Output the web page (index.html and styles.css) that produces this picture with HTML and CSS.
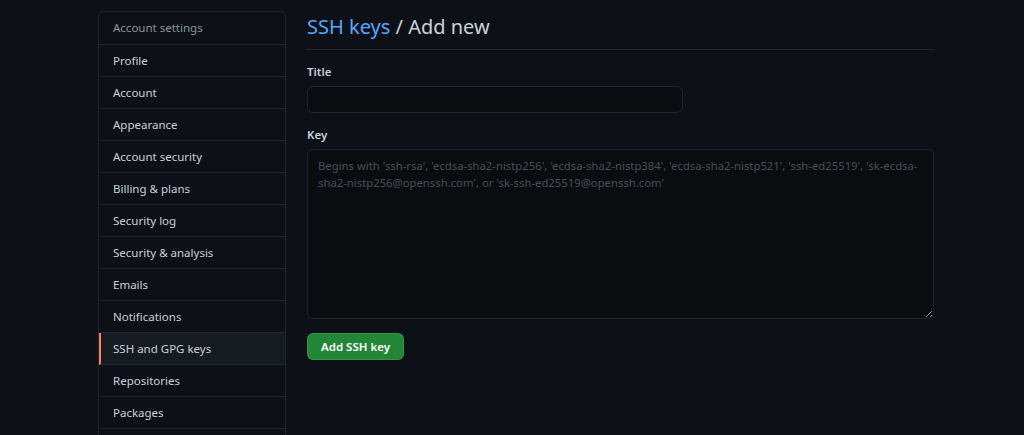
FILE: index.html
```html
<!DOCTYPE html>
<html lang="en">
<head>
    <meta charset="UTF-8">
    <meta name="viewport" content="width=device-width, initial-scale=1.0">
    <title>Add new SSH key</title>
    <link rel="stylesheet" href="styles.css">
</head>
<body>
    <div class="layout">
        <nav class="menu">
            <div class="menu-heading">Account settings</div>
            <a class="menu-item" href="#">Profile</a>
            <a class="menu-item" href="#">Account</a>
            <a class="menu-item" href="#">Appearance</a>
            <a class="menu-item" href="#">Account security</a>
            <a class="menu-item" href="#">Billing &amp; plans</a>
            <a class="menu-item" href="#">Security log</a>
            <a class="menu-item" href="#">Security &amp; analysis</a>
            <a class="menu-item" href="#">Emails</a>
            <a class="menu-item" href="#">Notifications</a>
            <a class="menu-item selected" href="#">SSH and GPG keys</a>
            <a class="menu-item" href="#">Repositories</a>
            <a class="menu-item" href="#">Packages</a>
        </nav>

        <main class="content">
            <div class="subhead">
                <h2 class="subhead-heading"><a href="#">SSH keys</a> / Add new</h2>
            </div>
            <form class="key-form">
                <label for="title">Title</label>
                <input type="text" id="title" class="form-control title-input">

                <label for="key">Key</label>
                <textarea id="key" class="form-control key-input" placeholder="Begins with 'ssh-rsa', 'ecdsa-sha2-nistp256', 'ecdsa-sha2-nistp384', 'ecdsa-sha2-nistp521', 'ssh-ed25519', 'sk-ecdsa-sha2-nistp256@openssh.com', or 'sk-ssh-ed25519@openssh.com'"></textarea>

                <button type="submit" class="btn-primary">Add SSH key</button>
            </form>
        </main>
    </div>
</body>
</html>
```

FILE: styles.css
```css
body {
    margin: 0;
    background: #0d1117;
    color: #c9d1d9;
    font-family: "Noto Sans", "Liberation Sans", sans-serif;
    font-size: 11.5px;
    line-height: 1.5;
}
.layout {
    display: flex;
    gap: 21px;
    padding: 11px 0 0 98px;
}
.menu {
    width: 186px;
    flex-shrink: 0;
    border: 1px solid #21262d;
    border-radius: 6px;
    height: 440px;
    overflow: hidden;
}
.menu-heading {
    padding: 7px 12px 7px 14px;
    color: #8b949e;
    border-bottom: 1px solid #21262d;
    height: 18px;
    line-height: 18px;
}
.menu-item {
    display: block;
    padding: 7px 12px;
    height: 17px;
    line-height: 17px;
    color: #c9d1d9;
    text-decoration: none;
    border-bottom: 1px solid #21262d;
    border-left: 2px solid transparent;
}
.menu-item.selected {
    background: #161b22;
    border-left-color: #f78166;
}
.content {
    width: 627px;
}
.subhead {
    border-bottom: 1px solid #21262d;
    padding-bottom: 9px;
    margin-bottom: 14px;
}
.subhead-heading {
    margin: 3px 0 0;
    font-size: 20px;
    font-weight: 400;
    line-height: 26px;
    color: #c9d1d9;
}
.subhead-heading a {
    color: #58a6ff;
    text-decoration: none;
}
.key-form {
    display: flex;
    flex-direction: column;
    align-items: flex-start;
}
label {
    font-weight: 600;
    line-height: 16px;
    margin-bottom: 6px;
}
.form-control {
    box-sizing: border-box;
    background: #0a0c10;
    border: 1px solid #21262d;
    border-radius: 6px;
    color: #c9d1d9;
    font-family: inherit;
    font-size: 11.5px;
    line-height: 17px;
    padding: 4px 10px;
}
.title-input {
    width: 376px;
    height: 27px;
    margin-bottom: 14px;
}
.key-input {
    width: 627px;
    height: 170px;
    font-size: 11.3px;
    padding: 7px 9px 4px 10px;
    margin-bottom: 14px;
    resize: vertical;
}
.key-input::placeholder {
    color: #484f58;
}
.btn-primary {
    background: #238636;
    color: #fff;
    border: 1px solid rgba(240, 246, 252, 0.1);
    border-radius: 6px;
    font-family: inherit;
    font-size: 11.5px;
    font-weight: 600;
    line-height: 17px;
    height: 27px;
    padding: 0 13px;
    cursor: pointer;
}
```
